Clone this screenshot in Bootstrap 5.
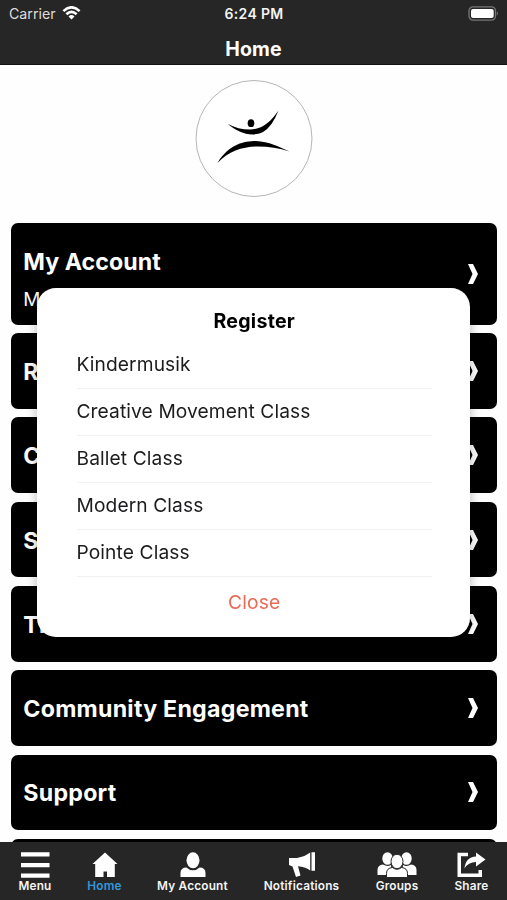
<!DOCTYPE html>
<html lang="en">
<head>
<meta charset="utf-8">
<meta name="viewport" content="width=device-width, initial-scale=1">
<title>Home</title>
<link href="https://cdn.jsdelivr.net/npm/bootstrap@5.3.0/dist/css/bootstrap.min.css" rel="stylesheet">
<style>
body{font-family:Inter,"Liberation Sans",sans-serif;height:900px;overflow:hidden;background:#fefefe}
.top-bar{height:65px;background:#262626;border-bottom:1px solid #111}
.status-row{height:28px;padding:0 8px 0 9px;font-size:14.2px;line-height:28px;color:#ddd}
.status-row>*{flex:1 1 0}
.status-row svg{margin-bottom:2px}
.wifi{margin-left:6px}
.clock{font-weight:600;font-size:14px;letter-spacing:.35px;color:#f4f4f4}
.page-title{font-size:19.5px;font-weight:700;line-height:42px;letter-spacing:.15px}
.logo-area{height:158px;padding-top:15px}
.tiles{padding:0 10.3px 0 11px;gap:8.5px}
.tile{height:75.8px;border-radius:7px;background:#000;padding:0 19px 0 12.3px;flex:none}
.tile-tall{height:101.6px}
.tile-title{font-size:23.2px;font-weight:700;line-height:28px;letter-spacing:.25px;padding-top:2px}
.tile-tall .tile-title{padding-top:11px;letter-spacing:.05px}
.tile-sub{font-size:19px;line-height:22px;margin-top:13px}
.popup-layer{z-index:20;padding-top:288px}
.popup-box{width:433px;height:349px;border-radius:19px;background:#fff;box-shadow:0 0 12px rgba(0,0,0,.28);padding:19.5px 38px 0 39.500px}
.popup-title{font-size:19.6px;line-height:26px;font-weight:700;letter-spacing:.25px}
.choice{height:47.15px;line-height:45px;font-size:19.2px;letter-spacing:.1px;color:#1c1c1e;border-bottom:1px solid #f1f1f1}
.choices{padding-top:8px}
.close-link{font-size:19.2px;line-height:50px;color:#ec6a55;letter-spacing:.2px}
.tab-bar{height:58.5px;background:#262626;z-index:10}
.tab-grid{display:grid;grid-template-columns:70px 69px 107px 111px 80px 69px;padding-top:10px}
.tab-item{font-size:11.8px;line-height:14px;font-weight:600;color:#f4f4f4;white-space:nowrap;letter-spacing:.2px}
.tab-item svg{margin-bottom:1.5px}
.tab-item.current{color:#3498db}
</style>
<script src="https://cdn.jsdelivr.net/npm/bootstrap@5.3.0/dist/js/bootstrap.bundle.min.js"></script>
</head>
<body>
<svg class="d-none"><symbol id="chev" viewBox="0 0 10 20"><path d="M0 0H5L10 10L5 20H0L4.500 10Z" fill="#fff"/></symbol></svg>
<header class="top-bar text-white">
  <div class="status-row d-flex align-items-center">
    <span class="d-flex align-items-center"><span class="carrier">Carrier</span>
      <svg class="wifi" width="19" height="14" viewBox="0 0 18 14" fill="none" stroke="#fff" stroke-width="2.6"><path d="M.9 5.1Q9-2.5 17.1 5.1M3.9 8.3Q9 3.5 14.1 8.3"/><path d="M9 13.6L6 10.4Q9 7.8 12 10.4Z" fill="#fff" stroke="none"/></svg></span>
    <span class="clock text-center">6:24 PM</span>
    <span class="d-flex justify-content-end align-items-center">
      <svg width="31" height="15" viewBox="0 0 31 15"><rect x="1" y=".9" width="26.5" height="13.2" rx="4" fill="none" stroke="#777" stroke-width="1.3"/><rect x="3" y="3" width="22.7" height="9" rx="2" fill="#fff"/><path d="M28.8 5.3Q31 7.5 28.8 9.7Z" fill="#777"/></svg></span>
  </div>
  <h1 class="page-title text-center m-0">Home</h1>
</header>
<main class="d-flex flex-column">
  <div class="logo-area text-center">
    <svg width="118" height="118" viewBox="0 0 118 118"><circle cx="59" cy="58.5" r="58" fill="#fff" stroke="#b5b5b5"/><ellipse cx="56" cy="43.2" rx="3.3" ry="3.9"/><path d="M33 44Q43 49.500 55 49.500C68 49.500 76 41 83.500 30.500Q77 47 68 52C57 57.500 43 53 33 44Z"/><path d="M22.500 83C34 64 49 61 61 61C74 61.500 84 67 94.500 71.500Q79 66.500 63 66.500C48 66.500 34 71 22.500 83Z"/></svg>
  </div>
  <div class="tiles d-flex flex-column text-white">
    <div class="tile tile-tall d-flex align-items-center justify-content-between"><div><div class="tile-title">My Account</div><div class="tile-sub">M</div></div><svg width="10" height="20"><use href="#chev"/></svg></div>
    <div class="tile d-flex align-items-center justify-content-between"><div class="tile-title">R</div><svg width="10" height="20"><use href="#chev"/></svg></div>
    <div class="tile d-flex align-items-center justify-content-between"><div class="tile-title">C</div><svg width="10" height="20"><use href="#chev"/></svg></div>
    <div class="tile d-flex align-items-center justify-content-between"><div class="tile-title">S</div><svg width="10" height="20"><use href="#chev"/></svg></div>
    <div class="tile d-flex align-items-center justify-content-between"><div class="tile-title">Ti</div><svg width="10" height="20"><use href="#chev"/></svg></div>
    <div class="tile d-flex align-items-center justify-content-between"><div class="tile-title">Community Engagement</div><svg width="10" height="20"><use href="#chev"/></svg></div>
    <div class="tile d-flex align-items-center justify-content-between"><div class="tile-title">Support</div><svg width="10" height="20"><use href="#chev"/></svg></div>
    <div class="tile"></div>
  </div>
</main>
<div class="popup-layer position-fixed top-0 start-0 w-100 d-flex justify-content-center">
  <section class="popup-box text-center">
    <h2 class="popup-title m-0 text-black">Register</h2>
    <div class="choices text-start">
      <div class="choice">Kindermusik</div>
      <div class="choice">Creative Movement Class</div>
      <div class="choice">Ballet Class</div>
      <div class="choice">Modern Class</div>
      <div class="choice">Pointe Class</div>
    </div>
    <div class="close-link">Close</div>
  </section>
</div>
<nav class="tab-bar fixed-bottom">
  <div class="tab-grid">
    <div class="tab-item d-flex flex-column align-items-center"><svg width="30" height="26" viewBox="0 0 30 26" fill="#fff"><path d="M1 .3H29.500V4.500H1ZM1 11H29.500V15.200H1ZM1 21.500H29.500V25.700H1Z"/></svg>Menu</div>
    <div class="tab-item current d-flex flex-column align-items-center"><svg width="26" height="26" viewBox="0 0 26 26" fill="#fff"><path d="M13 .5L25.500 12H22.800V25H15V19.500H11.500V25H3.200V12H.5Z"/></svg>Home</div>
    <div class="tab-item d-flex flex-column align-items-center"><svg width="26" height="26" viewBox="0 0 26 26" fill="#fff"><ellipse cx="13" cy="8.300" rx="6.500" ry="8"/><path d="M.5 25V21Q.5 15.500 6.500 15.500Q9 18.200 13 18.200T19.500 15.500Q25.500 15.500 25.500 21V25Z"/></svg>My Account</div>
    <div class="tab-item d-flex flex-column align-items-center"><svg width="28" height="26" viewBox="0 0 28 26" fill="#fff"><path d="M1 6H9Q17 4.500 22.200.5V18.500Q17 14.800 10 14.300L12.500 23.500L8 25L4.500 14.500L1 13ZM23.500.3H27V18.800H23.500Z"/></svg>Notifications</div>
    <div class="tab-item d-flex flex-column align-items-center"><svg width="40" height="26" viewBox="0 0 40 26" fill="#fff"><ellipse cx="10.500" cy="6.500" rx="5.200" ry="6.300"/><ellipse cx="29.500" cy="6.500" rx="5.200" ry="6.300"/><path d="M.5 23V18Q.5 13 6 12.500Q10 15 14 13L15 23ZM39.500 23V18Q39.500 13 34 12.500Q30 15 26 13L25 23Z"/><g stroke="#262626"><ellipse cx="20" cy="9.500" rx="6" ry="7.200"/><path d="M9.500 25.500V21.500Q9.500 16 15.500 15.500Q20 19 24.500 15.500Q30.500 16 30.500 21.500V25.500Z"/></g></svg>Groups</div>
    <div class="tab-item d-flex flex-column align-items-center"><svg width="29" height="26" viewBox="0 0 29 26" fill="#fff"><path d="M11 .8H.5V25H25V18H21.500V21.500H4V4.300H11Z"/><path d="M7.500 16.500Q8.500 5 19 4.500V.5L28.500 7.500L19 14.500V10Q11 10 7.500 16.500Z"/></svg>Share</div>
  </div>
</nav>
</body>
</html>
